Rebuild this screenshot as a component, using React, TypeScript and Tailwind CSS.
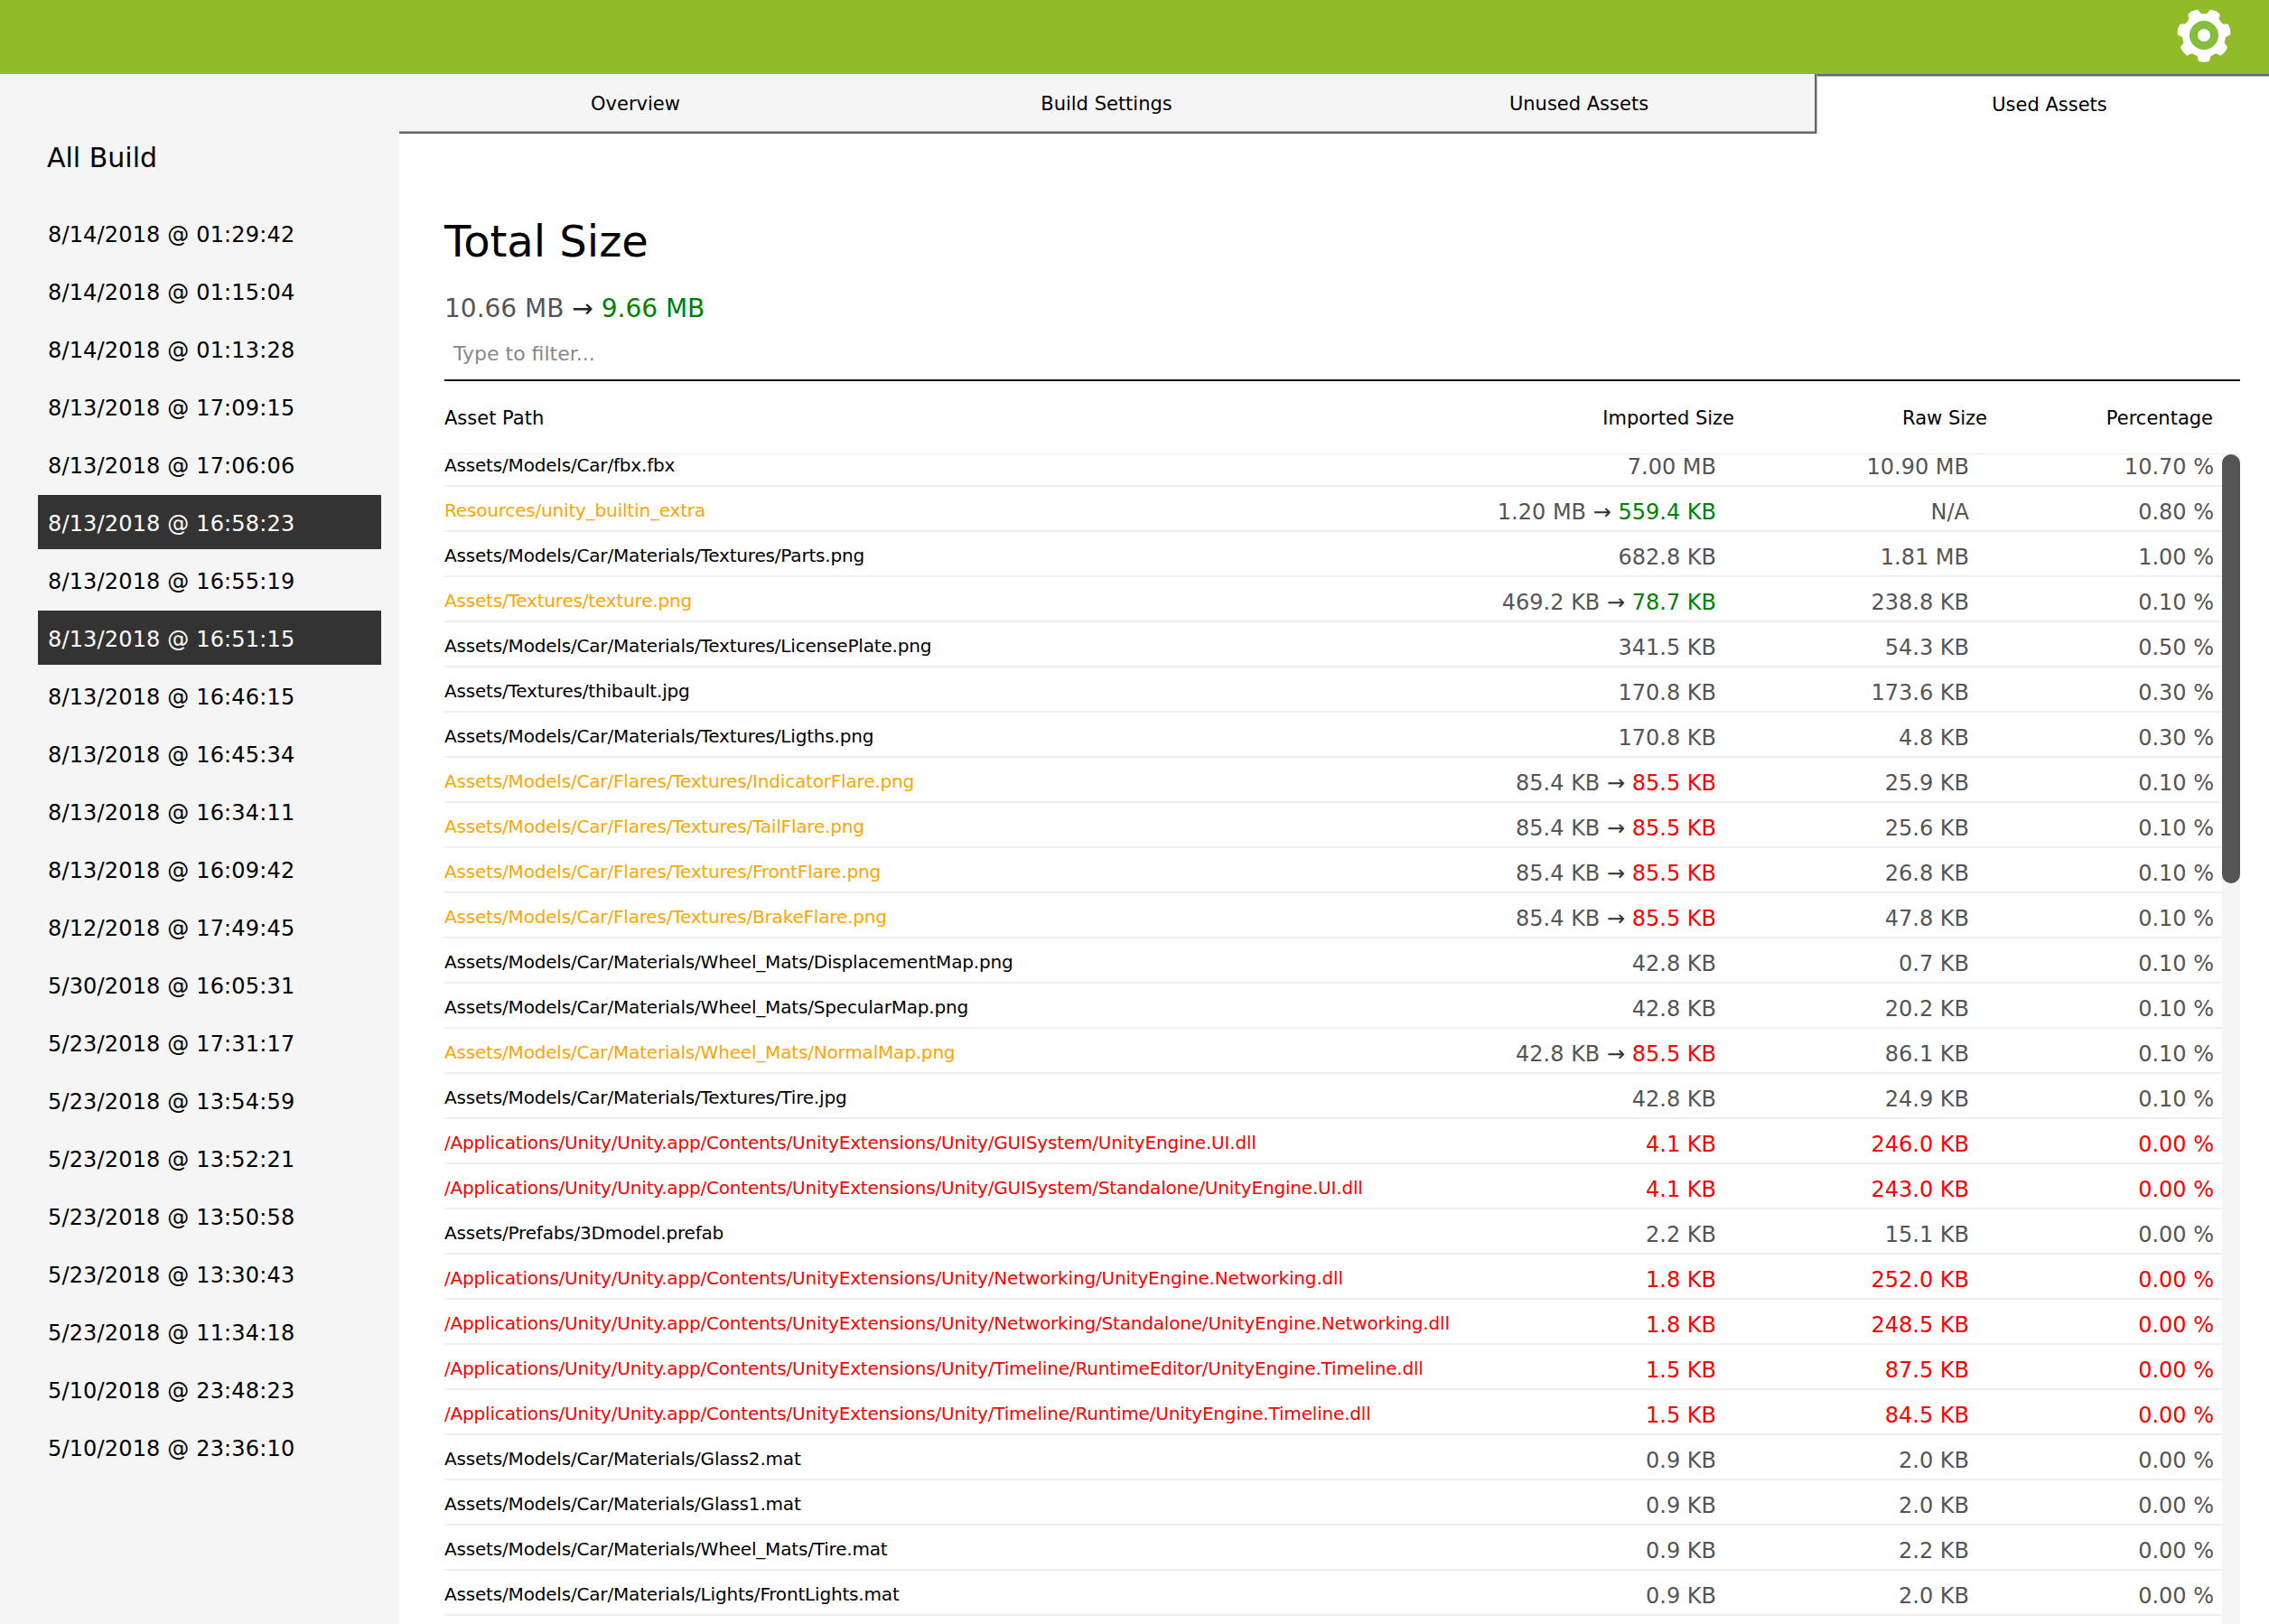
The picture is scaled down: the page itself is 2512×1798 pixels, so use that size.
const builds = [
  "8/14/2018 @ 01:29:42",
  "8/14/2018 @ 01:15:04",
  "8/14/2018 @ 01:13:28",
  "8/13/2018 @ 17:09:15",
  "8/13/2018 @ 17:06:06",
  "8/13/2018 @ 16:58:23",
  "8/13/2018 @ 16:55:19",
  "8/13/2018 @ 16:51:15",
  "8/13/2018 @ 16:46:15",
  "8/13/2018 @ 16:45:34",
  "8/13/2018 @ 16:34:11",
  "8/13/2018 @ 16:09:42",
  "8/12/2018 @ 17:49:45",
  "5/30/2018 @ 16:05:31",
  "5/23/2018 @ 17:31:17",
  "5/23/2018 @ 13:54:59",
  "5/23/2018 @ 13:52:21",
  "5/23/2018 @ 13:50:58",
  "5/23/2018 @ 13:30:43",
  "5/23/2018 @ 11:34:18",
  "5/10/2018 @ 23:48:23",
  "5/10/2018 @ 23:36:10",
];

const selectedBuilds = ["8/13/2018 @ 16:58:23", "8/13/2018 @ 16:51:15"];

type Asset = {
  path: string;
  imported: string;
  after?: string;
  afterTone?: "green" | "red";
  raw: string;
  percent: string;
  tone?: "black" | "orange" | "red";
};

const unity = "/Applications/Unity/Unity.app/Contents/UnityExtensions/Unity";
const car = "Assets/Models/Car";

const assets: Asset[] = [
  { path: `${car}/fbx.fbx`, imported: "7.00 MB", raw: "10.90 MB", percent: "10.70 %" },
  { path: "Resources/unity_builtin_extra", imported: "1.20 MB", after: "559.4 KB", afterTone: "green", raw: "N/A", percent: "0.80 %", tone: "orange" },
  { path: `${car}/Materials/Textures/Parts.png`, imported: "682.8 KB", raw: "1.81 MB", percent: "1.00 %" },
  { path: "Assets/Textures/texture.png", imported: "469.2 KB", after: "78.7 KB", afterTone: "green", raw: "238.8 KB", percent: "0.10 %", tone: "orange" },
  { path: `${car}/Materials/Textures/LicensePlate.png`, imported: "341.5 KB", raw: "54.3 KB", percent: "0.50 %" },
  { path: "Assets/Textures/thibault.jpg", imported: "170.8 KB", raw: "173.6 KB", percent: "0.30 %" },
  { path: `${car}/Materials/Textures/Ligths.png`, imported: "170.8 KB", raw: "4.8 KB", percent: "0.30 %" },
  { path: `${car}/Flares/Textures/IndicatorFlare.png`, imported: "85.4 KB", after: "85.5 KB", afterTone: "red", raw: "25.9 KB", percent: "0.10 %", tone: "orange" },
  { path: `${car}/Flares/Textures/TailFlare.png`, imported: "85.4 KB", after: "85.5 KB", afterTone: "red", raw: "25.6 KB", percent: "0.10 %", tone: "orange" },
  { path: `${car}/Flares/Textures/FrontFlare.png`, imported: "85.4 KB", after: "85.5 KB", afterTone: "red", raw: "26.8 KB", percent: "0.10 %", tone: "orange" },
  { path: `${car}/Flares/Textures/BrakeFlare.png`, imported: "85.4 KB", after: "85.5 KB", afterTone: "red", raw: "47.8 KB", percent: "0.10 %", tone: "orange" },
  { path: `${car}/Materials/Wheel_Mats/DisplacementMap.png`, imported: "42.8 KB", raw: "0.7 KB", percent: "0.10 %" },
  { path: `${car}/Materials/Wheel_Mats/SpecularMap.png`, imported: "42.8 KB", raw: "20.2 KB", percent: "0.10 %" },
  { path: `${car}/Materials/Wheel_Mats/NormalMap.png`, imported: "42.8 KB", after: "85.5 KB", afterTone: "red", raw: "86.1 KB", percent: "0.10 %", tone: "orange" },
  { path: `${car}/Materials/Textures/Tire.jpg`, imported: "42.8 KB", raw: "24.9 KB", percent: "0.10 %" },
  { path: `${unity}/GUISystem/UnityEngine.UI.dll`, imported: "4.1 KB", raw: "246.0 KB", percent: "0.00 %", tone: "red" },
  { path: `${unity}/GUISystem/Standalone/UnityEngine.UI.dll`, imported: "4.1 KB", raw: "243.0 KB", percent: "0.00 %", tone: "red" },
  { path: "Assets/Prefabs/3Dmodel.prefab", imported: "2.2 KB", raw: "15.1 KB", percent: "0.00 %" },
  { path: `${unity}/Networking/UnityEngine.Networking.dll`, imported: "1.8 KB", raw: "252.0 KB", percent: "0.00 %", tone: "red" },
  { path: `${unity}/Networking/Standalone/UnityEngine.Networking.dll`, imported: "1.8 KB", raw: "248.5 KB", percent: "0.00 %", tone: "red" },
  { path: `${unity}/Timeline/RuntimeEditor/UnityEngine.Timeline.dll`, imported: "1.5 KB", raw: "87.5 KB", percent: "0.00 %", tone: "red" },
  { path: `${unity}/Timeline/Runtime/UnityEngine.Timeline.dll`, imported: "1.5 KB", raw: "84.5 KB", percent: "0.00 %", tone: "red" },
  { path: `${car}/Materials/Glass2.mat`, imported: "0.9 KB", raw: "2.0 KB", percent: "0.00 %" },
  { path: `${car}/Materials/Glass1.mat`, imported: "0.9 KB", raw: "2.0 KB", percent: "0.00 %" },
  { path: `${car}/Materials/Wheel_Mats/Tire.mat`, imported: "0.9 KB", raw: "2.2 KB", percent: "0.00 %" },
  { path: `${car}/Materials/Lights/FrontLights.mat`, imported: "0.9 KB", raw: "2.0 KB", percent: "0.00 %" },
];

function GearIcon() {
  const teeth = [0, 1, 2, 3, 4, 5, 6];
  return (
    <svg width="62" height="62" viewBox="0 0 62 62" className="mr-[41px] -mt-[5px]">
      <g fill="#ffffff">
        <circle cx="31" cy="31" r="24" />
        {teeth.map((tooth) => (
          <path
            key={tooth}
            d="M22.5 12 L25 2.5 Q31 0 37 2.5 L39.5 12 Z"
            transform={`rotate(${180 + (tooth * 360) / 7} 31 31)`}
          />
        ))}
      </g>
      <circle cx="31" cy="31" r="16" fill="#85bd3c" />
      <circle cx="31" cy="31" r="7" fill="#ffffff" />
    </svg>
  );
}

function Sidebar() {
  return (
    <aside className="min-h-[1716px] w-[442px] shrink-0 bg-[#f5f5f5] pl-[42px] pr-[20px] pt-[73px]">
      <h2 className="pl-[10px] text-[30px] leading-[40px] text-black">All Build</h2>
      <ul className="mt-[33px]">
        {builds.map((build) => {
          const selected = selectedBuilds.includes(build);
          return (
            <li
              key={build}
              className={`mb-[4px] flex h-[60px] items-center pl-[11px] pt-[3px] text-[24px] tracking-[0.16px] ${
                selected ? "bg-[#333333] text-white" : "text-black"
              }`}
            >
              {build}
            </li>
          );
        })}
      </ul>
    </aside>
  );
}

function Tabs() {
  return (
    <nav className="flex h-[66px] overflow-hidden pt-0 text-[21px] text-black">
      <div className="flex w-[521px] shrink-0 items-center justify-center border-b-[2px] border-[#666666] bg-[#f5f5f5] pl-[2px] pt-[4px] shadow-[inset_0_-1px_0_#aaaaaa]">
        Overview
      </div>
      <div className="flex w-[522px] shrink-0 items-center justify-center border-b-[2px] border-[#666666] bg-[#f5f5f5] pl-[2px] pt-[4px] shadow-[inset_0_-1px_0_#aaaaaa]">
        Build Settings
      </div>
      <div className="flex w-[526px] shrink-0 items-center justify-center border-b-[2px] border-r-[2px] border-[#666666] bg-[#f5f5f5] pl-[2px] pt-[4px] shadow-[inset_0_-1px_0_#aaaaaa]">
        Unused Assets
      </div>
      <div className="flex w-[510px] shrink-0 items-center justify-center border-l-[1px] border-t-[2px] border-l-[#bbbbbb] border-t-[#666666] bg-white pl-[5px] pt-[2px] shadow-[inset_0_1px_0_#bbbbbb]">
        Used Assets
      </div>
    </nav>
  );
}

function AssetRow({ asset }: { asset: Asset }) {
  const pathColor =
    asset.tone === "orange" ? "text-[#ffa500]" : asset.tone === "red" ? "text-[#ff0000]" : "text-black";
  const valueColor = asset.tone === "red" ? "text-[#ff0000]" : "text-[#555555]";

  return (
    <div className="flex h-[50px] items-center border-b-[2px] border-[#f0f0f0] pr-[9px] text-[24px]">
      <div className={`min-w-0 flex-1 whitespace-nowrap pt-[4px] text-[20px] tracking-[-0.18px] ${pathColor}`}>
        {asset.path}
      </div>
      <div className={`w-[300px] whitespace-nowrap pt-[8px] text-right ${valueColor}`}>
        {asset.imported}
        {asset.after && (
          <>
            <span className="text-[#333333]"> → </span>
            <span className={asset.afterTone === "green" ? "text-[#008000]" : "text-[#ff0000]"}>{asset.after}</span>
          </>
        )}
      </div>
      <div className={`w-[280px] pt-[8px] text-right ${valueColor}`}>{asset.raw}</div>
      <div className={`w-[271px] pt-[8px] text-right ${valueColor}`}>{asset.percent}</div>
    </div>
  );
}

export default function App() {
  return (
    <div className="h-[1798px] overflow-hidden bg-white font-['DejaVu_Sans',sans-serif]">
      <header className="flex h-[82px] items-center justify-end bg-[#91bb28]">
        <GearIcon />
      </header>

      <div className="flex">
        <Sidebar />

        <main className="min-w-0 flex-1">
          <Tabs />

          <section className="pl-[50px] pr-[32px]">
            <h1 className="mt-[87px] text-[48px] leading-[64px] text-black">Total Size</h1>
            <p className="mt-[25px] text-[28px] leading-[36px] text-[#555555]">
              10.66 MB <span className="text-[#222222]">→</span> <span className="text-[#008000]">9.66 MB</span>
            </p>
            <div className="flex h-[62px] items-center border-b-[2px] border-[#111111] pl-[10px] pt-[2px] text-[22px] text-[#888888]">
              Type to filter...
            </div>

            <div className="flex h-[80px] items-center pr-[30px] pt-[3px] text-[21px] text-black">
              <div className="flex-1">Asset Path</div>
              <div className="w-[300px] text-right">Imported Size</div>
              <div className="w-[280px] text-right">Raw Size</div>
              <div className="w-[250px] text-right">Percentage</div>
            </div>

            <div className="flex h-[1296px] overflow-hidden border-t-[1px] border-[#f0f0f0]">
              <div className="min-w-0 flex-1">
                {/* list is scrolled down a little in the screenshot */}
                <div className="-mt-[14px]">
                  {assets.map((asset) => (
                    <AssetRow key={asset.path} asset={asset} />
                  ))}
                </div>
              </div>
              <div className="w-[20px] shrink-0 bg-[#f5f5f5]">
                <div className="h-[475px] rounded-[10px] bg-[#555555]" />
              </div>
            </div>
          </section>
        </main>
      </div>
    </div>
  );
}
